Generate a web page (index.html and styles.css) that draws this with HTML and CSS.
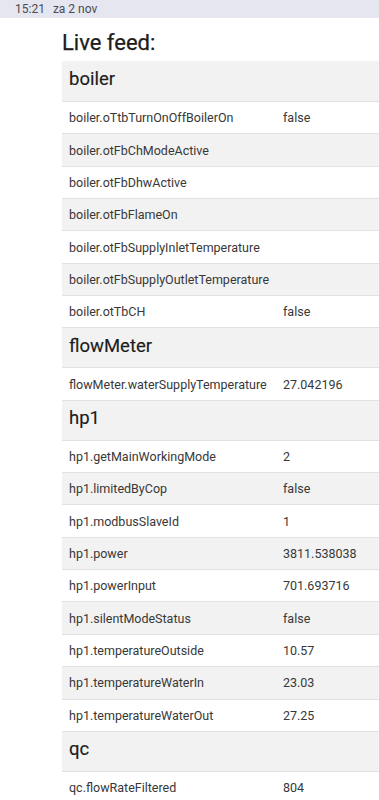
FILE: index.html
```html
<!DOCTYPE html>
<html>
<head>
<meta charset="utf-8">
<link rel="stylesheet" href="styles.css">
</head>
<body>
<div class="statusbar"><span>15:21</span><span>za 2 nov</span></div>
<main class="content">
<h1 class="title">Live feed:</h1>
<div class="feed">
<div class="row group"><div class="name">boiler</div></div>
<div class="row"><div class="name">boiler.oTtbTurnOnOffBoilerOn</div><div class="val">false</div></div>
<div class="row alt"><div class="name">boiler.otFbChModeActive</div><div class="val"></div></div>
<div class="row"><div class="name">boiler.otFbDhwActive</div><div class="val"></div></div>
<div class="row alt"><div class="name">boiler.otFbFlameOn</div><div class="val"></div></div>
<div class="row"><div class="name">boiler.otFbSupplyInletTemperature</div><div class="val"></div></div>
<div class="row alt"><div class="name">boiler.otFbSupplyOutletTemperature</div><div class="val"></div></div>
<div class="row"><div class="name">boiler.otTbCH</div><div class="val">false</div></div>
<div class="row group"><div class="name">flowMeter</div></div>
<div class="row"><div class="name">flowMeter.waterSupplyTemperature</div><div class="val">27.042196</div></div>
<div class="row group"><div class="name">hp1</div></div>
<div class="row"><div class="name">hp1.getMainWorkingMode</div><div class="val">2</div></div>
<div class="row alt"><div class="name">hp1.limitedByCop</div><div class="val">false</div></div>
<div class="row"><div class="name">hp1.modbusSlaveId</div><div class="val">1</div></div>
<div class="row alt"><div class="name">hp1.power</div><div class="val">3811.538038</div></div>
<div class="row"><div class="name">hp1.powerInput</div><div class="val">701.693716</div></div>
<div class="row alt"><div class="name">hp1.silentModeStatus</div><div class="val">false</div></div>
<div class="row"><div class="name">hp1.temperatureOutside</div><div class="val">10.57</div></div>
<div class="row alt"><div class="name">hp1.temperatureWaterIn</div><div class="val">23.03</div></div>
<div class="row"><div class="name">hp1.temperatureWaterOut</div><div class="val">27.25</div></div>
<div class="row group"><div class="name">qc</div></div>
<div class="row"><div class="name">qc.flowRateFiltered</div><div class="val">804</div></div>
</div>
</main>
</body>
</html>
```
FILE: styles.css
```css
html, body {
  margin: 0;
  padding: 0;
  background: #ffffff;
  font-family: Roboto, "Liberation Sans", sans-serif;
  color: #212529;
  overflow: hidden;
}
* {
  box-sizing: border-box;
}
.statusbar {
  height: 18px;
  background: #e5e6ef;
  display: flex;
  align-items: center;
  gap: 8px;
  padding-left: 15px;
  font-size: 12px;
  color: #4a4b55;
}
.content {
  padding-left: 62px;
}
.title {
  margin: 0;
  padding-top: 12px;
  height: 43px;
  font-size: 22px;
  font-weight: 400;
  -webkit-text-stroke: 0.25px currentColor;
  line-height: 26px;
  color: #1c1c1c;
}
.feed {
  display: flex;
  flex-direction: column;
}
.row {
  display: grid;
  grid-template-columns: 214px 1fr;
  align-items: center;
  height: 32.35px;
  border-top: 1px solid #e2e2e2;
  padding-left: 7px;
  font-size: 12.5px;
  color: #383838;
  white-space: nowrap;
}
.row.alt {
  background: #f2f2f2;
}
.row.group {
  height: 40px;
  padding-bottom: 4px;
  background: #f2f2f2;
  font-size: 18.5px;
  font-weight: 400;
  -webkit-text-stroke: 0.15px currentColor;
  color: #1c1c1c;
}
.row.group:first-child {
  border-top: none;
}
```
